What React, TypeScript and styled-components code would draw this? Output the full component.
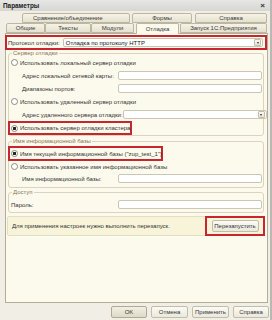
import React from 'react';
import styled, { createGlobalStyle } from 'styled-components';

const Global = createGlobalStyle`
  html, body { margin: 0; padding: 0; }
  body {
    width: 272px; height: 320px; overflow: hidden;
    background: #eceae3;
    font-family: "Liberation Sans", Arial, sans-serif;
    font-size: 6px;
    color: #333333;
  }
  * { box-sizing: border-box; }
`;

const Window = styled.div`
  width: 272px; height: 320px;
  display: flex; flex-direction: column;
  background: #f1efe5;
  border-right: 2px solid #b9b8b2;
`;

const TitleBar = styled.div`
  height: 11px; flex: none;
  display: flex; align-items: center; justify-content: space-between;
  padding: 0 5px 0 3px;
  background: linear-gradient(#e6e6e4, #d6d6d3);
  font-weight: bold; font-size: 6.4px; color: #222;
`;

const Close = styled.span`
  font-size: 8px; font-weight: bold; color: #333; line-height: 8px;
`;

const Body = styled.div`
  flex: 1; display: flex; flex-direction: column;
  padding: 2px 2px 0 5px;
`;

const TabRow = styled.div<{ $pad: number }>`
  height: 10px; flex: none; display: flex; align-items: flex-end;
  padding-left: ${p => p.$pad}px;
`;

const Tab = styled.div<{ $w: number; $gap?: number; $active?: boolean; $left?: number }>`
  width: ${p => p.$w}px; margin-left: ${p => p.$gap ?? 0}px;
  height: ${p => (p.$active ? 11 : 10)}px;
  display: flex; align-items: center;
  justify-content: ${p => (p.$left ? 'flex-start' : 'center')};
  padding-left: ${p => p.$left ?? 0}px;
  white-space: nowrap;
  border: 1px solid #bcb7a3; border-bottom: ${p => (p.$active ? 'none' : '1px solid #bcb7a3')};
  border-radius: 2px 2px 0 0;
  background: ${p => (p.$active ? '#fcfaec' : 'linear-gradient(#f6f3e6, #e5e1d0)')};
  color: #3a3a3a;
  position: relative; z-index: ${p => (p.$active ? 2 : 1)};
  margin-bottom: ${p => (p.$active ? -1 : 0)}px;
`;

const Panel = styled.div`
  flex: 1; display: flex; flex-direction: column;
  border: 1px solid #b3ae98;
  background: #fcfaec;
  padding: 1px 0 0 0;
`;

const RedBox = styled.div`
  border: 2px solid #c8262f;
`;

const ProtocolRow = styled(RedBox)`
  height: 15px; display: flex; align-items: center; gap: 3px;
  padding: 0 2px 0 1px;
  margin: 0 0 0 -1px;
`;

const Label = styled.span`
  white-space: nowrap;
`;

const Field = styled.div`
  flex: 1; height: 9px;
  display: flex; align-items: center; justify-content: space-between;
  background: #ffffff;
  border: 1px solid #c8c4b0; border-radius: 2px;
  padding: 0 1px 0 2px;
  color: #111;
  white-space: nowrap;
`;

const DropBtn = styled.span`
  width: 7px; height: 7px; flex: none;
  display: flex; align-items: center; justify-content: center;
  border: 1px solid #c2bea9; border-radius: 1px;
  background: linear-gradient(#faf8ef, #e6e2d2);
  &::after {
    content: ''; border-left: 1.5px solid transparent; border-right: 1.5px solid transparent;
    border-top: 2px solid #333;
  }
`;

const Group = styled.fieldset<{ $mt: number; $pb: number }>`
  margin: ${p => p.$mt}px 3px 0 2px;
  padding: 0 1px ${p => p.$pb}px 1px;
  border: 1px solid #d9d4bd; border-radius: 3px;
  min-width: 0;
`;

const Legend = styled.legend`
  padding: 0 1px; margin-left: 2px;
  line-height: 6px; font-size: 6px;
  color: #8c7458;
`;

const Row = styled.div<{ $h: number; $indent?: number; $mt?: number }>`
  height: ${p => p.$h}px; margin-top: ${p => p.$mt ?? 0}px;
  display: flex; align-items: center;
  white-space: nowrap;
  padding-left: ${p => p.$indent ?? 1}px;
`;

const RedRow = styled(RedBox)<{ $h: number; $w: number; $mt?: number }>`
  height: ${p => p.$h}px; width: ${p => p.$w}px; margin-top: ${p => p.$mt ?? 0}px;
  margin-left: -2px;
  display: flex; align-items: center; padding-left: 1px;
  white-space: nowrap;
`;

const InputBox = styled.div<{ $x: number }>`
  margin-left: auto; width: ${p => 262 - p.$x}px; height: 9px; flex: none;
  background: #fff; border: 1px solid #cbc7b4; border-radius: 2px;
  display: flex; align-items: center; justify-content: flex-end; padding-right: 1px;
`;

const Radio = styled.span<{ $on?: boolean }>`
  width: 7px; height: 7px; flex: none; margin-right: 2px;
  border-radius: 50%; border: 1px solid #8d8b80;
  background: radial-gradient(circle, ${p => (p.$on ? '#222 0 1.4px, #fff 1.6px' : '#fff 0, #fff 100%')});
`;

const Info = styled.div`
  margin: 3px 3px 0 1px; height: 20px;
  display: flex; align-items: center; justify-content: space-between;
  background: #f8f4d9; border: 1px solid #e3dec2; border-radius: 2px;
  padding: 0 0 0 4px;
  white-space: nowrap;
`;

const BtnFrame = styled(RedBox)`
  width: 60px; height: 20px; margin-right: -2px;
  display: flex; align-items: center; justify-content: center;
`;

const Button = styled.div<{ $w: number; $default?: boolean }>`
  width: ${p => p.$w}px; height: 12px; flex: none;
  display: flex; align-items: center; justify-content: center;
  border: 1px solid ${p => (p.$default ? '#b0aa92' : '#c2bda8')}; border-radius: 2px;
  background: ${p => (p.$default ? 'linear-gradient(#f2efe2, #dedac8)' : 'linear-gradient(#fbfaf4, #ebe8dc)')};
  color: #333;
  white-space: nowrap;
`;

const Footer = styled.div`
  height: 17px; flex: none;
  display: flex; align-items: flex-start; justify-content: flex-end; gap: 4px;
  padding: 3px 1px 0 0;
`;

export default function App() {
  return (
    <>
      <Global />
      <Window>
        <TitleBar>
          <span>Параметры</span>
          <Close>×</Close>
        </TitleBar>
        <Body>
          <TabRow $pad={17}>
            <Tab $w={108} $left={10}>Сравнение/объединение</Tab>
            <Tab $w={60} $gap={2}>Формы</Tab>
            <Tab $w={72} $gap={3}>Справка</Tab>
          </TabRow>
          <TabRow $pad={1}>
            <Tab $w={39}>Общие</Tab>
            <Tab $w={46}>Тексты</Tab>
            <Tab $w={43}>Модули</Tab>
            <Tab $w={43} $gap={2} $active>Отладка</Tab>
            <Tab $w={87} $gap={1}>Запуск 1С:Предприятия</Tab>
          </TabRow>
          <Panel>
            <ProtocolRow>
              <Label>Протокол отладки:</Label>
              <Field>
                <span>Отладка по протоколу HTTP</span>
                <DropBtn />
              </Field>
            </ProtocolRow>

            <Group $mt={0} $pb={0}>
              <Legend>Сервер отладки</Legend>
              <Row $h={13}><Radio />Использовать локальный сервер отладки</Row>
              <Row $h={13} $indent={12}>
                <Label>Адрес локальной сетевой карты:</Label>
                <InputBox $x={118} />
              </Row>
              <Row $h={13} $indent={12}>
                <Label>Диапазоны портов:</Label>
                <InputBox $x={118} />
              </Row>
              <Row $h={13}><Radio />Использовать удаленный сервер отладки</Row>
              <Row $h={13} $indent={12}>
                <Label>Адрес удаленного сервера отладки:</Label>
                <InputBox $x={118}><DropBtn /></InputBox>
              </Row>
              <RedRow $h={14} $w={124}><Radio $on />Использовать сервер отладки кластера</RedRow>
            </Group>

            <Group $mt={2} $pb={2}>
              <Legend>Имя информационной базы</Legend>
              <RedRow $h={15} $w={155} $mt={2}><Radio $on />Имя текущей информационной базы ("zup_test_1")</RedRow>
              <Row $h={11}><Radio />Использовать указанное имя информационной базы</Row>
              <Row $h={13} $indent={12}>
                <Label>Имя информационной базы:</Label>
                <InputBox $x={118} />
              </Row>
            </Group>

            <Group $mt={1} $pb={1}>
              <Legend>Доступ</Legend>
              <Row $h={13} $mt={3} $indent={1}>
                <Label>Пароль:</Label>
                <InputBox $x={118} />
              </Row>
            </Group>

            <Info>
              <span>Для применения настроек нужно выполнить перезапуск.</span>
              <BtnFrame>
                <Button $w={47}>Перезапустить</Button>
              </BtnFrame>
            </Info>
          </Panel>
        </Body>
        <Footer>
          <Button $w={36} $default>OK</Button>
          <Button $w={37}>Отмена</Button>
          <Button $w={37}>Применить</Button>
          <Button $w={36}>Справка</Button>
        </Footer>
      </Window>
    </>
  );
}
